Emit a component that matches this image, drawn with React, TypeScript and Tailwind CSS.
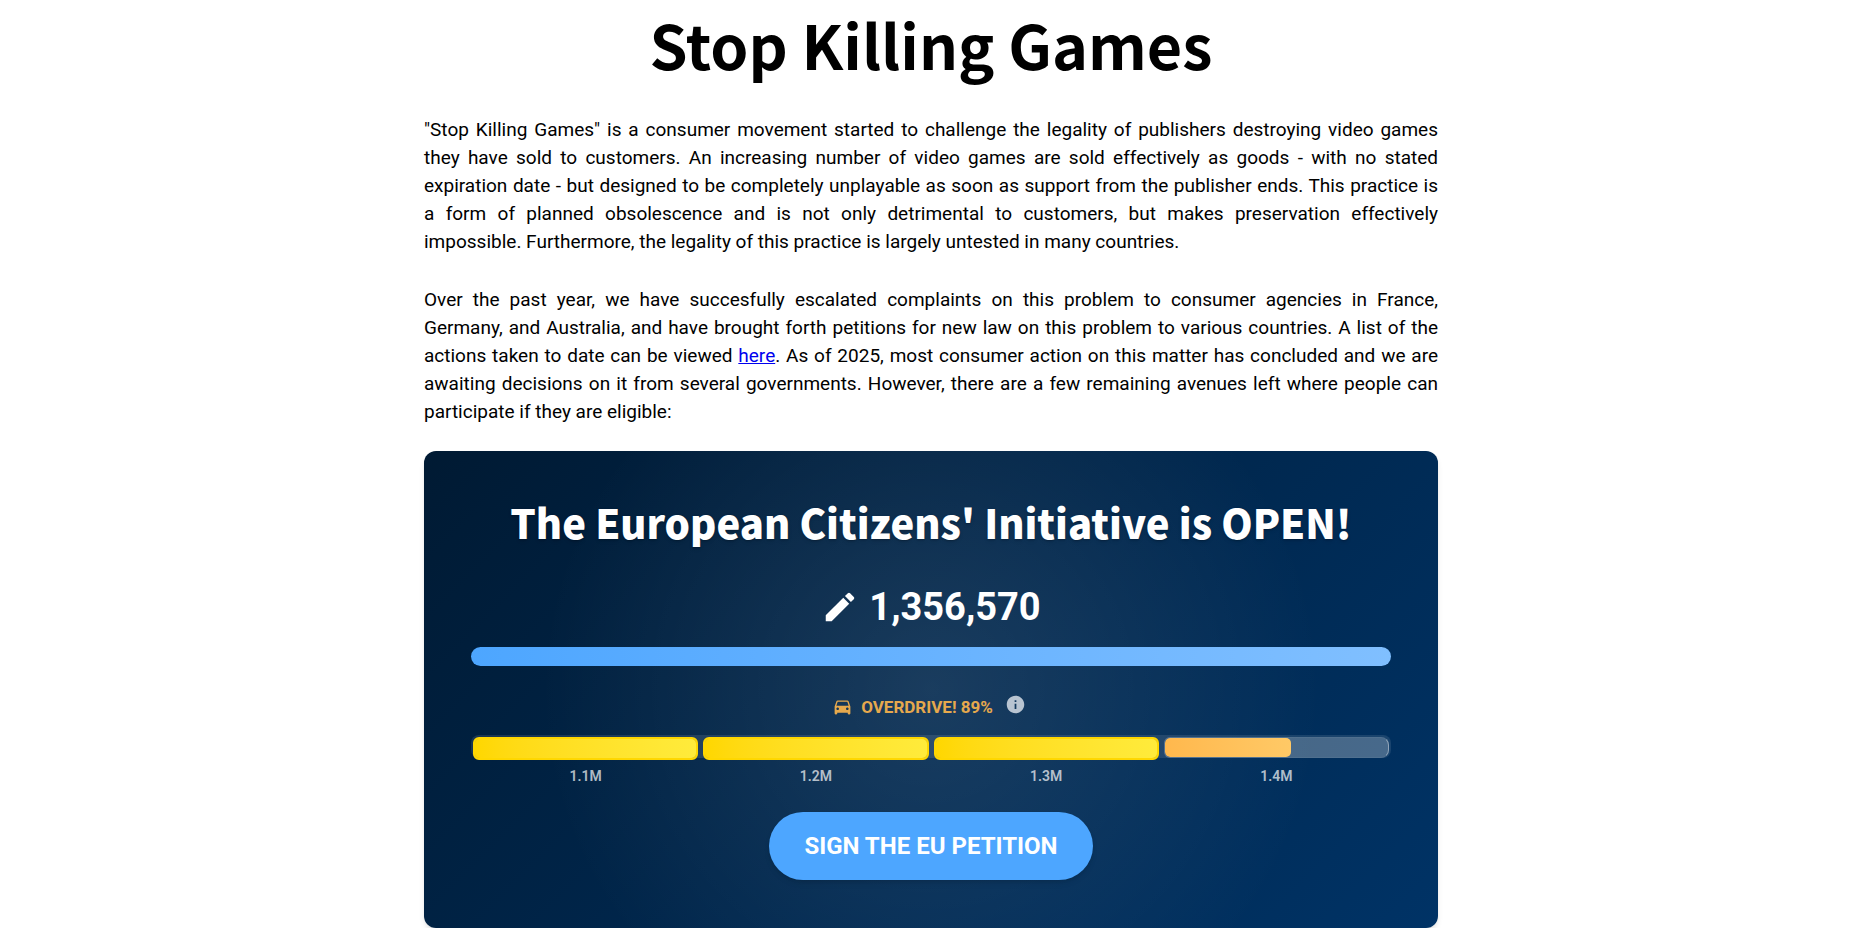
import { useState } from 'react'
import clsx from 'clsx'
import { MdDirectionsCar, MdEdit, MdInfo } from 'react-icons/md'

const GOAL_STEP = 100_000

const milestones = [
  { label: '1.1M', start: 1_000_000 },
  { label: '1.2M', start: 1_100_000 },
  { label: '1.3M', start: 1_200_000 },
  { label: '1.4M', start: 1_300_000 },
]

function Segment({ start, signatures }: { start: number; signatures: number }) {
  const filled = Math.min(Math.max((signatures - start) / GOAL_STEP, 0), 1)
  const done = filled === 1

  return (
    <div
      className={clsx(
        done
          ? '-mb-0.5 rounded-md border-2 border-[#ffd700] bg-[#e6c619]'
          : 'overflow-hidden rounded-md rounded-r-lg border-y border-l border-r border-white/5 border-r-white/40 bg-white/20',
      )}
    >
      <div
        className={clsx(
          'h-full rounded-[5px] bg-linear-to-r',
          done ? 'from-[#ffd700] to-[#ffeb3b]' : 'from-[#ffb84d] to-[#ffc966]',
        )}
        style={{ width: `${filled * 100}%` }}
      />
    </div>
  )
}

export default function App() {
  const [signatures] = useState(1_356_570)

  return (
    <main className="mr-3 flex flex-col items-center bg-white font-['Roboto',sans-serif] text-black">
      <div className="w-full max-w-[1014px]">
        <h1 className="pt-2 text-center font-['Noto_Sans_CJK_SC',sans-serif] text-[61px] leading-[72px] font-bold">
          Stop Killing Games
        </h1>

        <div className="mt-9 space-y-[30px] text-justify text-[19px] leading-[28px]">
          <p>
            "Stop Killing Games" is a consumer movement started to challenge the legality of
            publishers destroying video games they have sold to customers. An increasing number of
            video games are sold effectively as goods - with no stated expiration date - but
            designed to be completely unplayable as soon as support from the publisher ends. This
            practice is a&nbsp;form of planned obsolescence and is not only detrimental to
            customers, but makes preservation effectively impossible.&nbsp;Furthermore, the legality
            of this practice is largely untested in many countries.
          </p>
          <p>
            Over the past year, we have succesfully escalated complaints on this problem to consumer
            agencies in France, Germany,&nbsp;and Australia, and have brought forth petitions for
            new law on this problem to various countries. A list of the actions&nbsp;taken to date
            can be viewed{' '}
            <a href="#actions" className="text-[#0000ee] underline">
              here
            </a>
            . As of 2025, most consumer action on this matter has concluded and we are
            awaiting&nbsp;decisions on it from several governments. However, there are a few
            remaining avenues left where people can participate&nbsp;if they are eligible:
          </p>
        </div>

        <section className="mt-[25px] flex flex-col items-center rounded-xl bg-[radial-gradient(circle_at_center,rgba(255,255,255,0.1),transparent_70%),linear-gradient(135deg,#001a33,#003366)] px-[47px] pt-[45px] pb-12 text-white shadow-md">
          <h2 className="text-center font-['Noto_Sans_CJK_SC',sans-serif] text-[40px] leading-[52px] font-black text-shadow-md">
            The European Citizens' Initiative is OPEN!
          </h2>

          <div className="mt-[35px] flex items-center gap-2.5 text-[38px] leading-[48px] font-bold">
            <MdEdit className="size-[38px]" />
            {signatures.toLocaleString('en-US')}
          </div>

          <div className="mt-4 h-[19px] w-full rounded-full bg-linear-to-r from-[#4da6ff] to-[#80bfff]" />

          <div className="mt-7 flex items-center text-[#e6a94d]">
            <MdDirectionsCar className="size-[21px]" />
            <span className="ml-2 text-[17px] leading-6 font-bold">OVERDRIVE! 89%</span>
            <button
              type="button"
              aria-label="About overdrive"
              className="mr-1 mb-1 ml-3 text-[#b8c4d1]"
            >
              <MdInfo className="size-[21px]" />
            </button>
          </div>

          <div className="mt-4 grid h-[23px] w-full grid-cols-4 gap-[5px] rounded-lg bg-white/10 px-0.5 pt-0.5">
            {milestones.map((m) => (
              <Segment key={m.label} start={m.start} signatures={signatures} />
            ))}
          </div>
          <div className="mt-2 grid w-full grid-cols-4 gap-[5px] px-0.5 text-center text-sm font-semibold text-white/70">
            {milestones.map((m) => (
              <span key={m.label}>{m.label}</span>
            ))}
          </div>

          <a
            href="#sign"
            className="mt-[26px] rounded-full bg-[#4da6ff] px-[35px] py-5 text-2xl leading-7 font-bold shadow-md"
          >
            SIGN THE EU PETITION
          </a>
        </section>
      </div>
    </main>
  )
}
